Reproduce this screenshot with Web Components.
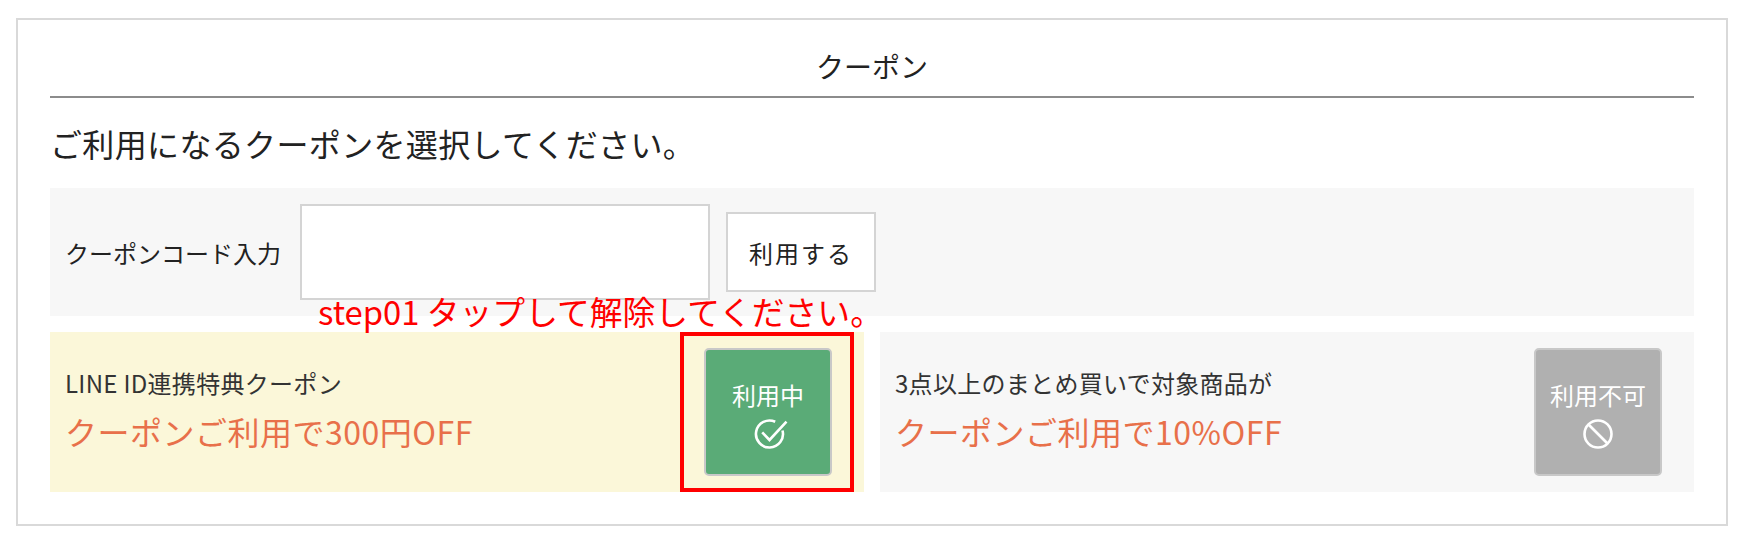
<!DOCTYPE html>
<html lang="ja">
<head>
<meta charset="utf-8">
<title>クーポン</title>
<style>
  html, body { margin: 0; background: #fff; }
  body { font-family: "Noto Sans CJK JP", "Noto Sans", sans-serif; color: #222; }
</style>
</head>
<body>
<coupon-panel heading="クーポン" lead="ご利用になるクーポンを選択してください。">
  <coupon-code></coupon-code>
  <coupon-note>step01 タップして解除してください。</coupon-note>
  <div style="display:grid;grid-template-columns:814px 814px;gap:16px;">
    <coupon-card active title-text="LINE ID連携特典クーポン" offer="クーポンご利用で300円OFF" state="利用中"></coupon-card>
    <coupon-card title-text="3点以上のまとめ買いで対象商品が" offer="クーポンご利用で10%OFF" state="利用不可"></coupon-card>
  </div>
</coupon-panel>
<script>
class CouponPanel extends HTMLElement {
  constructor() {
    super();
    const shadow = this.attachShadow({ mode: "open" });
    shadow.innerHTML = `
      <style>
        :host {
          display: block;
          position: relative;
          box-sizing: border-box;
          width: 1712px;
          height: 508px;
          margin: 18px 0 0 16px;
          padding: 0 32px;
          border: 2px solid #d9d9d9;
        }
        h2 {
          margin: 0;
          height: 78px;
          box-sizing: border-box;
          padding-top: 24px;
          border-bottom: 2px solid #8c8c8c;
          font-size: 28px;
          line-height: 44px;
          font-weight: 400;
          text-align: center;
        }
        p {
          margin: 0;
          height: 90px;
          font-size: 32px;
          letter-spacing: 0.35px;
          line-height: 90px;
          white-space: nowrap;
        }
      </style>
      <h2></h2>
      <p></p>
      <slot></slot>
    `;
    shadow.querySelector("h2").textContent = this.getAttribute("heading");
    shadow.querySelector("p").textContent = this.getAttribute("lead");
  }
}

class CouponCode extends HTMLElement {
  constructor() {
    super();
    const shadow = this.attachShadow({ mode: "open" });
    shadow.innerHTML = `
      <style>
        :host {
          display: flex;
          align-items: center;
          box-sizing: border-box;
          height: 128px;
          margin-bottom: 16px;
          padding: 0 0 0 15px;
          background: #f7f7f7;
          font-size: 24px;
        }
        label { width: 235px; white-space: nowrap; }
        .input {
          box-sizing: border-box;
          width: 410px;
          height: 96px;
          margin-right: 16px;
          background: #fff;
          border: 2px solid #d4d4d4;
        }
        .btn {
          box-sizing: border-box;
          width: 150px;
          height: 80px;
          display: flex;
          align-items: center;
          justify-content: center;
          background: #fff;
          border: 2px solid #d4d4d4;
          letter-spacing: 2px;
        }
      </style>
      <label>クーポンコード入力</label>
      <div class="input"></div>
      <div class="btn">利用する</div>
    `;
  }
}

class CouponNote extends HTMLElement {
  constructor() {
    super();
    const shadow = this.attachShadow({ mode: "open" });
    shadow.innerHTML = `
      <style>
        /* annotation over the form */
        :host {
          position: absolute;
          left: 300px;
          top: 269px;
          z-index: 2;
          color: #f00;
          font-size: 32.8px;
          line-height: 44px;
          white-space: nowrap;
        }
      </style>
      <slot></slot>
    `;
  }
}

class CouponCard extends HTMLElement {
  constructor() {
    super();
    const active = this.hasAttribute("active");
    const icon = active
      ? `<svg width="40" height="32" viewBox="0 0 40 32" fill="none" stroke="#fff" stroke-width="2.6">
           <path d="M34.5 12.5A13.5 13.5 0 1 1 27.2 3.8"/>
           <path d="M14.2 14.3l7.3 7.7L38.5 3.7"/>
         </svg>`
      : `<svg width="32" height="32" viewBox="0 0 32 32" fill="none" stroke="#fff" stroke-width="2.6">
           <circle cx="16" cy="16" r="13.5"/>
           <path d="M6.5 6.5l19 19"/>
         </svg>`;
    const shadow = this.attachShadow({ mode: "open" });
    shadow.innerHTML = `
      <style>
        :host {
          display: flex;
          align-items: center;
          justify-content: space-between;
          box-sizing: border-box;
          height: 160px;
          padding: 0 32px 0 15px;
          background: ${active ? "#fbf7d9" : "#f7f7f7"};
          position: relative;
        }
        .text { padding-bottom: 4px; }
        .title { font-size: 24px; letter-spacing: 0.3px; line-height: 30px; margin-bottom: 11px; white-space: nowrap; color: #333; }
        .offer { font-size: 32px; letter-spacing: 0.5px; line-height: 44px; color: #e8704a; white-space: nowrap; }
        .state {
          box-sizing: border-box;
          width: 128px;
          height: 128px;
          padding-top: 6px;
          display: flex;
          flex-direction: column;
          align-items: center;
          justify-content: center;
          gap: 8px;
          border: 2px solid #c8c8c8;
          border-radius: 5px;
          background: ${active ? "#5aab77" : "#b0b0b0"};
          color: #fff;
          font-size: 24px;
          line-height: 30px;
        }
        svg { display: block; }
        .mark {
          position: absolute;
          left: 630px;
          top: 0;
          width: 174px;
          height: 160px;
          box-sizing: border-box;
          border: 4px solid #f00;
        }
      </style>
      <div class="text">
        <div class="title">${this.getAttribute("title-text")}</div>
        <div class="offer">${this.getAttribute("offer")}</div>
      </div>
      <div class="state"><span>${this.getAttribute("state")}</span>${icon}</div>
      ${active ? '<div class="mark"></div>' : ""}
    `;
  }
}

customElements.define("coupon-panel", CouponPanel);
customElements.define("coupon-code", CouponCode);
customElements.define("coupon-note", CouponNote);
customElements.define("coupon-card", CouponCard);
</script>
</body>
</html>
